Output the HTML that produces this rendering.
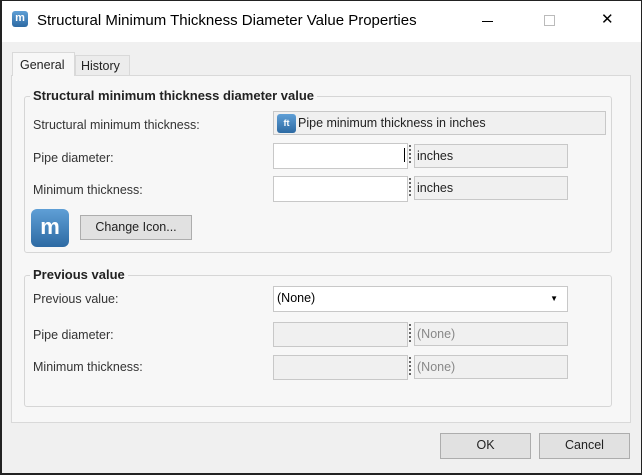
<!DOCTYPE html>
<html><head><style>
*{box-sizing:border-box;margin:0;padding:0}
body{width:642px;height:475px;overflow:hidden;font-family:"Liberation Sans",sans-serif;font-size:12.5px;color:#222;background:#f0f0f0;position:relative}
.frame{position:absolute;left:0;top:0;width:642px;height:475px;border:2px solid #222;border-top-width:1px;border-right-width:1px;pointer-events:none;z-index:9}
.title{position:absolute;left:0;top:0;width:642px;height:42px;background:#fff}
.a{position:absolute}
.ico{border-radius:3px;background:linear-gradient(#5f9fd6,#2d6aa3);color:#fff;font-weight:bold;text-align:center}
.box{position:absolute;border:1px solid #c8c8c8;background:#fff}
.dis{background:#f0f0f0}
.lbl{position:absolute;left:33px;color:#333}
.grp{position:absolute;left:24px;width:588px;border:1px solid #d6d6d6;border-radius:3px}
.leg{position:absolute;left:5px;top:-9px;background:#f7f7f7;padding:0 3px;font-weight:bold;font-size:13px;color:#222}
.dots{position:absolute;width:2px;border-left:2px dotted #666}
.btn{position:absolute;border:1px solid #adadad;background:#e1e1e1;text-align:center;line-height:23px;color:#222}
.u{padding-left:2px;line-height:22px}
</style></head><body><div class="frame"></div>
<div class="title">
<div class="a ico" style="left:12px;top:11px;width:16px;height:16px;font-size:11px;line-height:15px">m</div>
<div class="a" style="left:37px;top:12px;font-size:15px;color:#000">Structural Minimum Thickness Diameter Value Properties</div>
<div class="a" style="left:482px;top:21px;width:11px;height:1px;background:#000"></div>
<div class="a" style="left:544px;top:15px;width:11px;height:11px;border:1px solid #bbb"></div>
<div class="a" style="left:601px;top:10px;font-size:15px;color:#000">✕</div>
</div>
<div class="a" style="left:11px;top:75px;width:620px;height:348px;background:#f7f7f7;border:1px solid #d9d9d9"></div>
<div class="a" style="left:12px;top:52px;width:63px;height:24px;background:#f7f7f7;border:1px solid #d9d9d9;border-bottom:none;padding:5px 0 0 7px">General</div>
<div class="a" style="left:75px;top:55px;width:55px;height:20px;background:#ececec;border:1px solid #d9d9d9;border-bottom:none;padding:3px 0 0 5px">History</div>

<div class="grp" style="top:96px;height:157px"><div class="leg">Structural minimum thickness diameter value</div></div>
<div class="lbl" style="top:118px">Structural minimum thickness:</div>
<div class="box dis" style="left:273px;top:111px;width:333px;height:24px"></div>
<div class="a ico" style="left:277px;top:114px;width:19px;height:19px;font-size:9px;line-height:18px">ft</div>
<div class="a" style="left:298px;top:116px;color:#222">Pipe minimum thickness in inches</div>
<div class="lbl" style="top:151px">Pipe diameter:</div>
<div class="box" style="left:273px;top:143px;width:135px;height:26px"></div>
<div class="a" style="left:404px;top:148px;width:1px;height:14px;background:#000"></div>
<div class="dots" style="left:409px;top:145px;height:18px"></div>
<div class="box dis u" style="left:414px;top:144px;width:154px;height:24px">inches</div>
<div class="lbl" style="top:183px">Minimum thickness:</div>
<div class="box" style="left:273px;top:176px;width:135px;height:26px"></div>
<div class="dots" style="left:409px;top:178px;height:18px"></div>
<div class="box dis u" style="left:414px;top:176px;width:154px;height:24px">inches</div>
<div class="a ico" style="left:31px;top:209px;width:38px;height:38px;font-size:22px;line-height:35px;border-radius:6px">m</div>
<div class="btn" style="left:80px;top:215px;width:112px;height:25px">Change Icon...</div>

<div class="grp" style="top:275px;height:132px"><div class="leg">Previous value</div></div>
<div class="lbl" style="top:292px">Previous value:</div>
<div class="box" style="left:273px;top:286px;width:295px;height:26px;padding:4px 0 0 3px;color:#000">(None)<span style="position:absolute;right:9px;top:7px;font-size:8px">▼</span></div>
<div class="lbl" style="top:328px">Pipe diameter:</div>
<div class="box dis" style="left:273px;top:322px;width:135px;height:25px"></div>
<div class="dots" style="left:409px;top:324px;height:18px"></div>
<div class="box dis u" style="left:414px;top:322px;width:154px;height:24px;color:#888">(None)</div>
<div class="lbl" style="top:360px">Minimum thickness:</div>
<div class="box dis" style="left:273px;top:355px;width:135px;height:25px"></div>
<div class="dots" style="left:409px;top:357px;height:18px"></div>
<div class="box dis u" style="left:414px;top:355px;width:154px;height:24px;color:#888">(None)</div>

<div class="btn" style="left:440px;top:433px;width:91px;height:26px">OK</div>
<div class="btn" style="left:539px;top:433px;width:91px;height:26px">Cancel</div>
</body></html>
